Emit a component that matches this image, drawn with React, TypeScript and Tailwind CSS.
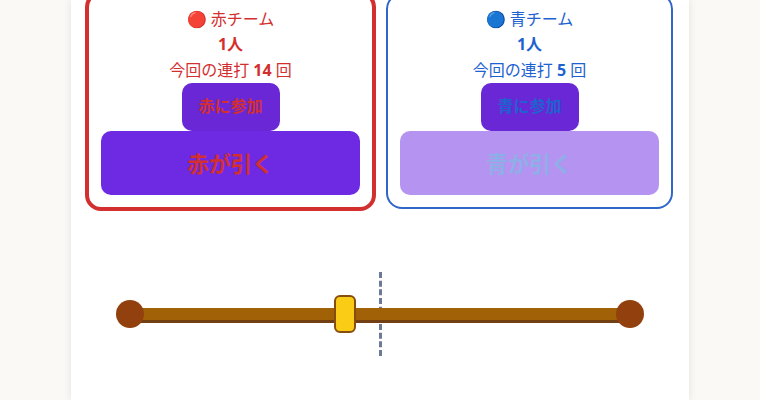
import React from 'react';

interface TeamCardProps {
  name: string;
  emoji: string;
  count: number;
  combo: number;
  joinLabel: string;
  pullLabel: string;
  colorClass: string;
  boxClass: string;
  pullClass: string;
}

const TeamCard = ({ name, emoji, count, combo, joinLabel, pullLabel, colorClass, boxClass, pullClass }: TeamCardProps) => (
  <div className={`flex flex-col items-center bg-white p-3 text-center leading-[25.6px] ${colorClass} ${boxClass}`}>
    <div>{emoji} {name}</div>
    <div className="font-bold">{count}人</div>
    <div>今回の連打 <b>{combo}</b> 回</div>
    <button className="h-12 w-[98px] rounded-[10px] bg-[#6a27d6] pb-0.5 text-base font-bold">{joinLabel}</button>
    <button className={`h-16 w-full rounded-[10px] text-[21.6px] font-bold ${pullClass}`}>{pullLabel}</button>
  </div>
);

const RopeGame = () => (
  <div className="relative mx-auto mt-[60.4px] h-[84px] w-[528px]">
    <div className="absolute left-[262.5px] top-0 h-full border-l-[3px] border-dashed border-[#6b7a96]" />
    <div className="relative flex h-full items-center pt-1">
      <div className="z-10 -mt-1 h-7 w-7 rounded-full bg-[#92400e]" />
      <div className="-mx-3.5 h-[15px] flex-1 border-b-[3px] border-[#713f12] bg-[#a16207]" />
      <div className="z-10 -mt-1 h-7 w-7 rounded-full bg-[#92400e]" />
    </div>
    <div className="absolute left-[218px] top-[23px] h-[38px] w-[22px] rounded-md border-2 border-[#854d0e] bg-[#facc15]" />
  </div>
);

export default function App() {
  return (
    <div className="h-[400px] w-[760px] overflow-hidden bg-[#faf9f6] font-['Noto_Sans','Noto_Sans_CJK_JP',sans-serif]">
      <div className="mx-auto flow-root h-full w-[618px] bg-white pl-3.5 shadow-[0_0_8px_rgba(0,0,0,0.1)]">
        <div className="-mt-[9.4px] flex items-center gap-2.5">
          <TeamCard
            name="赤チーム"
            emoji="🔴"
            count={1}
            combo={14}
            joinLabel="赤に参加"
            pullLabel="赤が引く"
            colorClass="text-[#d32f2f]"
            boxClass="w-[291px] rounded-2xl border-4 border-[#d32f2f]"
            pullClass="bg-[#6d2ae2]"
          />
          <TeamCard
            name="青チーム"
            emoji="🔵"
            count={1}
            combo={5}
            joinLabel="青に参加"
            pullLabel="青が引く"
            colorClass="text-[#1e62d0]"
            boxClass="w-[287px] rounded-2xl border-2 border-[#2f66c8]"
            pullClass="bg-[#6d2ae2] opacity-50"
          />
        </div>
        <div className="-ml-3.5">
          <RopeGame />
        </div>
      </div>
    </div>
  );
}
